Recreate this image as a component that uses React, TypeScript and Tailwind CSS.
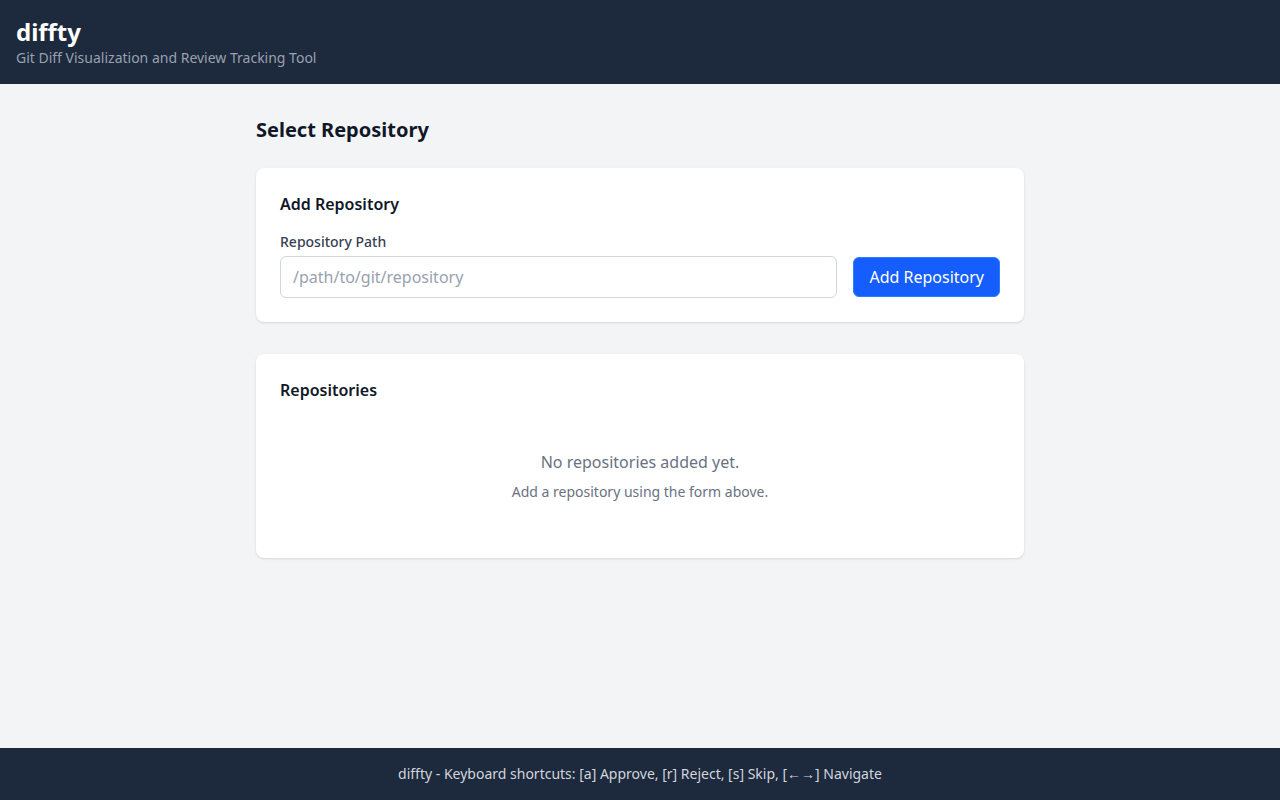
export default function App() {
  return (
    <div className="min-h-screen flex flex-col bg-gray-100 font-['Noto_Sans',sans-serif]">
      <header className="bg-slate-800 text-white px-4 py-4">
        <h1 className="text-2xl font-bold">diffty</h1>
        <p className="text-sm text-gray-400">Git Diff Visualization and Review Tracking Tool</p>
      </header>

      <main className="flex-1 py-8">
        <div className="max-w-3xl mx-auto">
          <h2 className="text-xl font-bold text-gray-900 mb-6">Select Repository</h2>

          <section className="bg-white rounded-lg shadow p-6 mb-8">
            <h3 className="text-base font-semibold text-gray-900 mb-4">Add Repository</h3>
            <div className="flex items-end gap-4">
              <div className="flex-1">
                <label className="block text-sm font-medium text-gray-700 mb-1">Repository Path</label>
                <input
                  type="text"
                  placeholder="/path/to/git/repository"
                  className="w-full border border-gray-300 rounded-md px-3 py-2 text-base text-gray-900 placeholder:text-gray-400 outline-none"
                />
              </div>
              <button
                type="button"
                className="bg-blue-600 hover:bg-blue-700 text-white border border-blue-500 rounded-md px-[15px] py-2 text-base leading-[22px] mb-px"
              >
                Add Repository
              </button>
            </div>
          </section>

          <section className="bg-white rounded-lg shadow p-6">
            <h3 className="text-base font-semibold text-gray-900 mb-4">Repositories</h3>
            <div className="py-8 text-center">
              <p className="text-base text-gray-500">No repositories added yet.</p>
              <p className="text-sm text-gray-500 mt-2">Add a repository using the form above.</p>
            </div>
          </section>
        </div>
      </main>

      <footer className="bg-slate-800 text-gray-300 py-4 text-center text-sm">
        diffty - Keyboard shortcuts: [a] Approve, [r] Reject, [s] Skip, [←→] Navigate
      </footer>
    </div>
  );
}
